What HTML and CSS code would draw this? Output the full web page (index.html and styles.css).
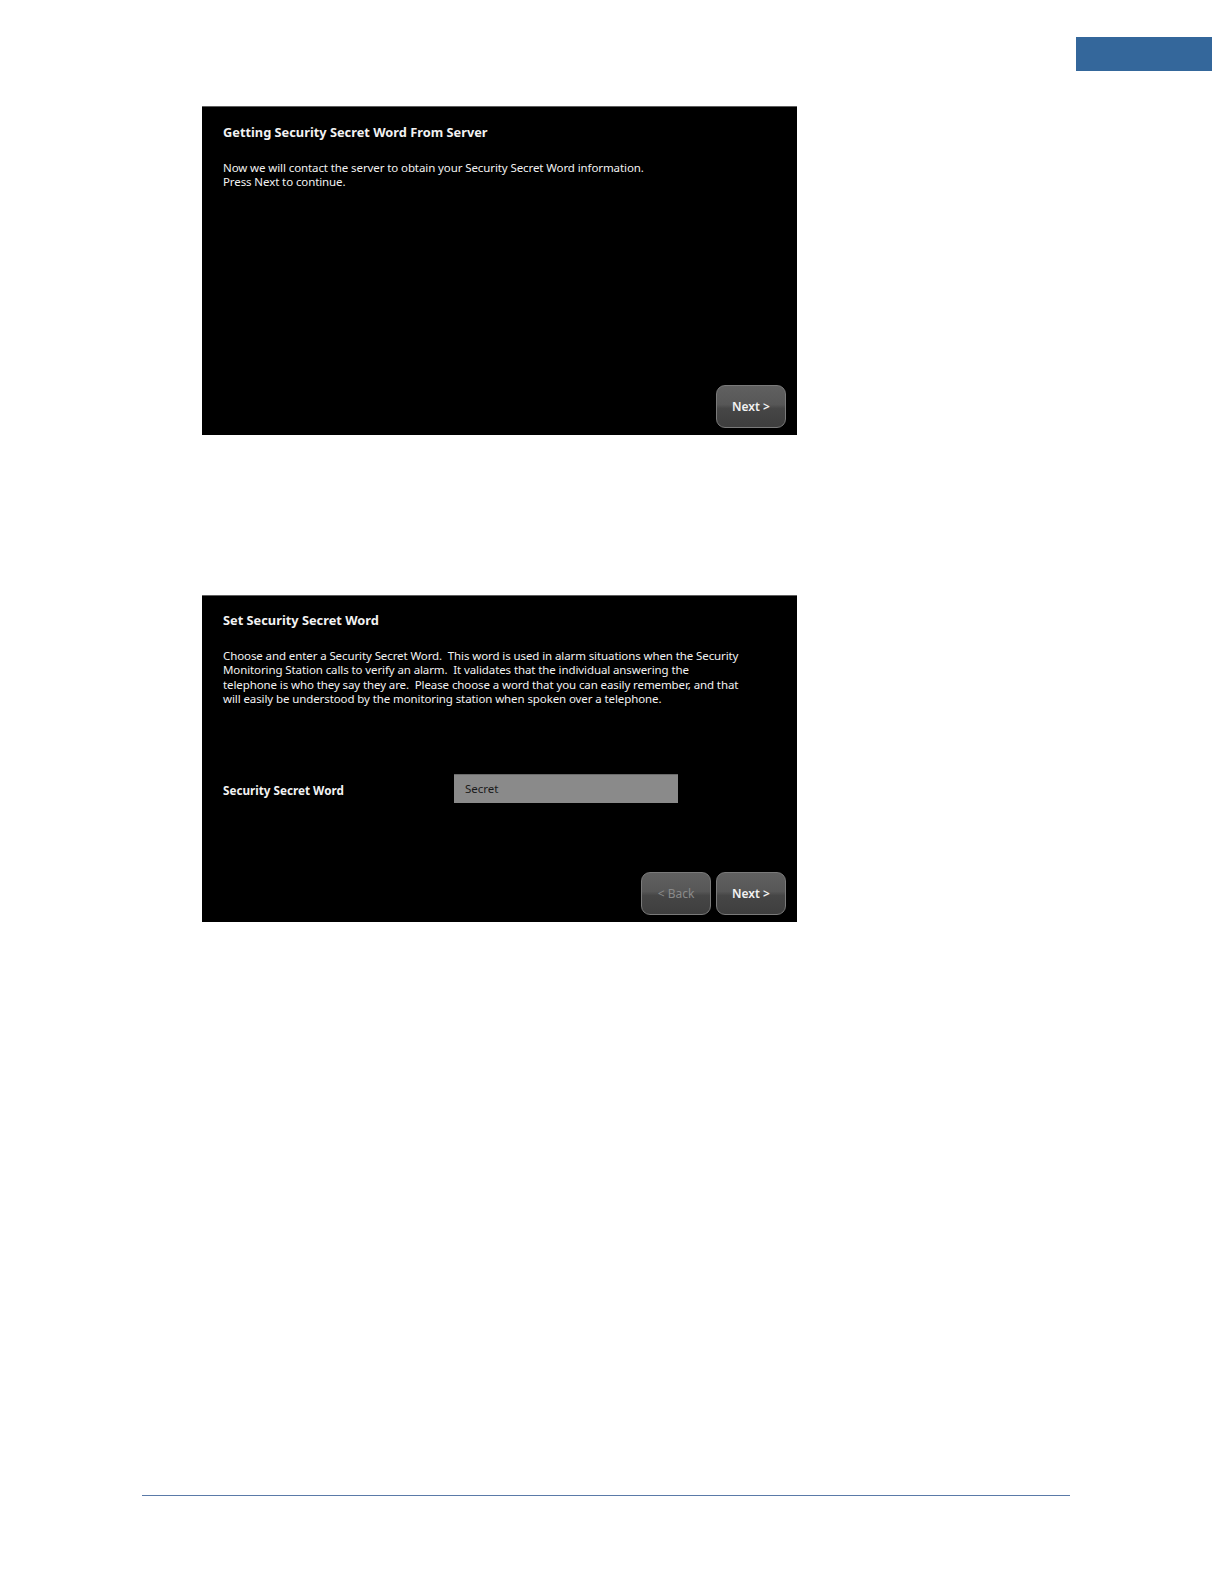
FILE: index.html
```html
<!DOCTYPE html>
<html>
<head>
<meta charset="utf-8">
<link rel="stylesheet" href="styles.css">
</head>
<body>
<div class="page">
  <header class="top">
    <div class="tab"></div>
  </header>

  <section class="screen screen-one">
    <h1 class="title">Getting Security Secret Word From Server</h1>
    <p class="text">Now we will contact the server to obtain your Security Secret Word information.<br>Press Next to continue.</p>
    <div class="actions">
      <button class="btn">Next &gt;</button>
    </div>
  </section>

  <section class="screen screen-two">
    <h1 class="title">Set Security Secret Word</h1>
    <p class="text">Choose and enter a Security Secret Word.&nbsp; This word is used in alarm situations when the Security<br>Monitoring Station calls to verify an alarm.&nbsp; It validates that the individual answering the<br>telephone is who they say they are.&nbsp; Please choose a word that you can easily remember, and that<br>will easily be understood by the monitoring station when spoken over a telephone.</p>
    <div class="field">
      <span class="label">Security Secret Word</span>
      <div class="input">Secret</div>
    </div>
    <div class="actions">
      <button class="btn btn-disabled">&lt; Back</button>
      <button class="btn">Next &gt;</button>
    </div>
  </section>

  <footer class="foot"></footer>
</div>
</body>
</html>
```

FILE: styles.css
```css
html, body {
  margin: 0;
  padding: 0;
  background: #ffffff;
}

.page {
  width: 1224px;
  height: 1584px;
  position: relative;
  font-family: "Noto Sans", "Open Sans", "DejaVu Sans", sans-serif;
}

.top {
  display: flex;
  justify-content: flex-end;
  padding-top: 37px;
  padding-right: 12px;
}

.tab {
  width: 136px;
  height: 34px;
  background: #34679b;
}

.screen {
  box-sizing: border-box;
  width: 595px;
  margin-left: 202px;
  background: #000000;
  border-top: 1px solid #5e5e5e;
  display: flex;
  flex-direction: column;
  padding: 17px 11px 7px 21px;
  color: #f2f2f2;
}

.screen-one {
  height: 329px;
  margin-top: 35px;
}

.screen-two {
  height: 327px;
  margin-top: 160px;
  padding-top: 16px;
}

.title {
  margin: 0;
  font-size: 12.8px;
  line-height: 16px;
  font-weight: 700;
}

.text {
  margin: 21px 0 0 0;
  font-size: 11.5px;
  line-height: 14.3px;
  letter-spacing: -0.1px;
}

.field {
  display: flex;
  align-items: center;
  margin-top: 68px;
}

.label {
  width: 231px;
  font-size: 11.7px;
  font-weight: 700;
  padding-top: 2px;
}

.input {
  box-sizing: border-box;
  width: 224px;
  height: 29px;
  background: #8a8a8a;
  border-top: 1px solid #6a6a6a;
  color: #1a1a1a;
  font-size: 11.5px;
  line-height: 28px;
  padding-left: 11px;
}

.actions {
  margin-top: auto;
  display: flex;
  justify-content: flex-end;
  gap: 5px;
}

.btn {
  box-sizing: border-box;
  width: 70px;
  height: 43px;
  border-radius: 9px;
  border: 1.5px solid #7a7a7a;
  background: linear-gradient(#606060 0%, #575757 45%, #464646 55%, #3e3e3e 100%);
  color: #f2f2f2;
  font-family: "Noto Sans", "Open Sans", "DejaVu Sans", sans-serif;
  font-size: 12px;
  font-weight: 600;
  padding: 0;
}

.btn-disabled {
  color: #8a8a8a;
  font-weight: 400;
}

.foot {
  position: absolute;
  left: 142px;
  top: 1495px;
  width: 928px;
  height: 1px;
  background: #5a7aa8;
}
```
